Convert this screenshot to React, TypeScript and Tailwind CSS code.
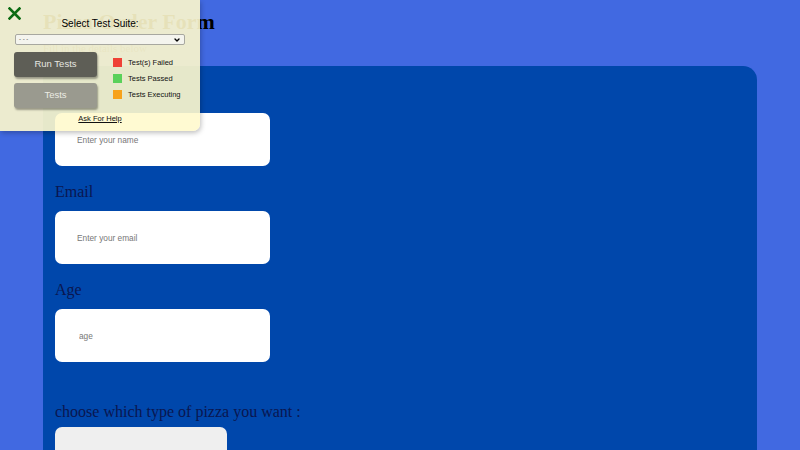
import { ChevronDown } from 'lucide-react'

const fields = [
  { label: 'Name', placeholder: 'Enter your name', pad: 'pl-[22px]' },
  { label: 'Email', placeholder: 'Enter your email', pad: 'pl-[22px]' },
  { label: 'Age', placeholder: 'age', pad: 'pl-[24px]' },
]

const legend = [
  { color: 'bg-[#ef4136]', text: 'Test(s) Failed' },
  { color: 'bg-[#5ad15a]', text: 'Tests Passed' },
  { color: 'bg-[#f7a21b]', text: 'Tests Executing' },
]

function TestPanel() {
  return (
    <aside className="absolute left-0 top-0 h-[131px] w-[200px] rounded-br-[7px] bg-[#fffacd]/90 font-['Liberation_Sans',Arial,sans-serif] shadow-[1px_2px_5px_rgba(0,0,0,0.25)]">
      <button type="button" className="absolute left-[8px] top-[7px] text-[#0b6b12]" aria-label="close">
        <svg width="13" height="13" viewBox="0 0 13 13">
          <path d="M1.5 1.5 L11.5 11.5 M11.5 1.5 L1.5 11.5" stroke="currentColor" strokeWidth="2.6" strokeLinecap="square" />
        </svg>
      </button>
      <p className="pt-[18px] text-center text-[10px] leading-[12px] text-black">Select Test Suite:</p>
      <div className="mx-[15px] mt-[4px] flex h-[11px] items-center justify-between rounded-[2px] border border-[#a8a8a0] bg-[#f4f4ee] pl-[3px] pr-[3px] text-[6px] text-[#333]">
        <span>- - -</span>
        <ChevronDown size={8} strokeWidth={4} className="text-black" />
      </div>
      <div className="mt-[7px] flex pl-[14px]">
        <div className="flex w-[83px] flex-col gap-[6px]">
          <button type="button" className="h-[25px] rounded-[3px] bg-[#5e5e56] text-[9.5px] text-[#e6e6e0] shadow-[1px_2px_2px_rgba(0,0,0,0.35)]">Run Tests</button>
          <button type="button" className="h-[25px] rounded-[3px] bg-[#9a9a8f] text-[9.5px] text-[#ececE4] shadow-[1px_2px_2px_rgba(0,0,0,0.35)]">Tests</button>
        </div>
        <ul className="ml-[16px] mt-[6px] flex flex-col gap-[7px]">
          {legend.map((item) => (
            <li key={item.text} className="flex h-[9px] items-center gap-[6px] text-[7.5px] text-[#111]">
              <span className={`h-[9px] w-[9px] ${item.color}`} />
              {item.text}
            </li>
          ))}
        </ul>
      </div>
      <p className="mt-[6px] text-center text-[7.5px] leading-[9px]">
        <a className="text-[#111] underline">Ask For Help</a>
      </p>
    </aside>
  )
}

export default function App() {
  return (
    <main className="relative h-[450px] overflow-hidden bg-[#4169e1] px-[43px] font-['Liberation_Serif','Times_New_Roman',serif]">
      <h1 className="pt-[9px] text-[22px] font-bold leading-[26px] text-black">Pizza Order Form</h1>
      <p className="mt-[7px] text-[11px] leading-[13px] text-[#1c2c6a]">Fill in the details below</p>
      <form className="mt-[11px] h-[400px] rounded-[14px] bg-[#0047ab] px-[12px] pt-[17px]">
        {fields.map((f) => (
          <div key={f.label} className="mb-[15px]">
            <label className="block text-[16px] leading-[22px] text-[#0a1650]">{f.label}</label>
            <input
              placeholder={f.placeholder}
              className={`mt-[8px] block h-[53px] w-[215px] rounded-[7px] bg-white ${f.pad} font-['Liberation_Sans',Arial,sans-serif] text-[8.3px] outline-none placeholder:text-[#777]`}
            />
          </div>
        ))}
        <label className="mt-[39px] block text-[16px] leading-[22px] text-[#0a1650]">choose which type of pizza you want :</label>
        <div className="mt-[4px] h-[60px] w-[172px] rounded-[7px] bg-[#efefef]" />
      </form>
      <TestPanel />
    </main>
  )
}
